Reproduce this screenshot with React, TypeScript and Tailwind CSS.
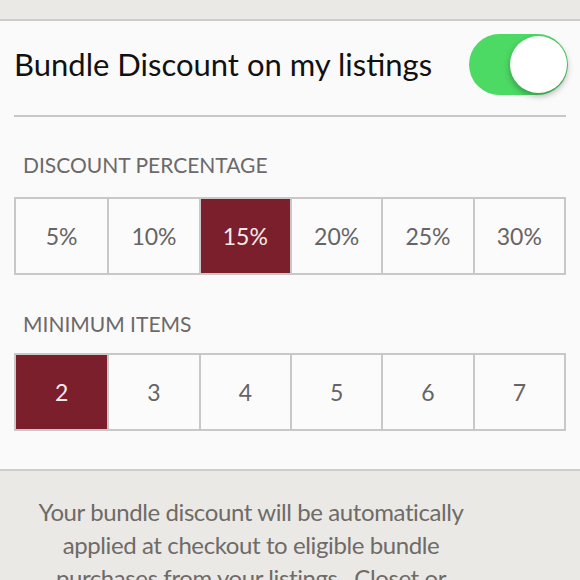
import React, { useState } from 'react';

const percentages = ['5%', '10%', '15%', '20%', '25%', '30%'];
const minItems = ['2', '3', '4', '5', '6', '7'];

interface SegmentRowProps {
  options: string[];
  selected: string;
  onSelect: (v: string) => void;
}

const SegmentRow: React.FC<SegmentRowProps> = ({ options, selected, onSelect }) => {
  return (
    <div className="mx-[14px] grid grid-cols-6 border-2 border-[#c9c7c7] bg-[#fcfbfb]">
      {options.map((opt, i) => (
        <button
          key={opt}
          onClick={() => onSelect(opt)}
          className={`h-[74px] flex items-center justify-center text-[23px] ${i > 0 ? 'border-l-2 border-[#c9c7c7]' : ''} ${
            opt === selected ? 'bg-[#7c1f2d] text-[#f4eaec]' : 'text-[#666464]'
          }`}
        >
          {opt}
        </button>
      ))}
    </div>
  );
};

const App: React.FC = () => {
  const [enabled, setEnabled] = useState(true);
  const [pct, setPct] = useState('15%');
  const [min, setMin] = useState('2');

  return (
    <div className="w-[580px] h-[580px] overflow-hidden bg-[#ebe9e5] font-['Lato',sans-serif]">
      <div className="h-[19px]" />
      <div className="bg-[#fbfafa] border-t-2 border-b-2 border-[#cfcdca]">
        <div className="flex items-center justify-between pl-[14px] pr-[12px] h-[86px] mb-[8px]">
          <span className="text-[31px] leading-none text-[#111]">Bundle Discount on my listings</span>
          <button
            onClick={() => setEnabled(!enabled)}
            className={`relative w-[99px] h-[61px] rounded-full ${enabled ? 'bg-[#4cd964]' : 'bg-[#e5e5e5]'}`}
          >
            <span
              className={`absolute top-[2px] w-[57px] h-[57px] rounded-full bg-white shadow-[0_3px_6px_rgba(0,0,0,0.3)] ${
                enabled ? 'right-[1px]' : 'left-[1px]'
              }`}
            />
          </button>
        </div>
        <div className="mx-[14px] h-[2px] bg-[#c8c6c6]" />
        <div className="pt-[37px] pb-[22px] px-[23px] text-[21px] leading-[21px] text-[#6b6969]">
          DISCOUNT PERCENTAGE
        </div>
        <SegmentRow options={percentages} selected={pct} onSelect={setPct} />
        <div className="pt-[38px] pb-[19px] px-[23px] text-[21px] leading-[21px] text-[#6b6969]">
          MINIMUM ITEMS
        </div>
        <SegmentRow options={minItems} selected={min} onSelect={setMin} />
        <div className="h-[38px]" />
      </div>
      <p className="w-[502px] pt-[24px] text-center text-[24px] leading-[33px] tracking-[-0.4px] text-[#6e6b68]">
        Your bundle discount will be automatically
        <br />
        applied at checkout to eligible bundle
        <br />
        purchases from your listings.&nbsp; Closet or
      </p>
    </div>
  );
};

export default App;
